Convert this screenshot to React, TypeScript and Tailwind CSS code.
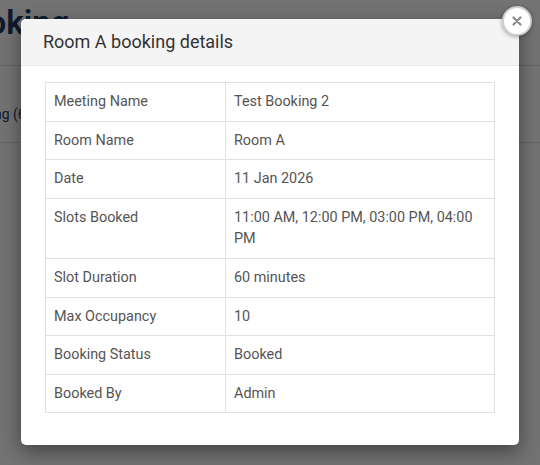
const rows: [string, string][] = [
  ['Meeting Name', 'Test Booking 2'],
  ['Room Name', 'Room A'],
  ['Date', '11 Jan 2026'],
  ['Slots Booked', '11:00 AM, 12:00 PM, 03:00 PM, 04:00 PM'],
  ['Slot Duration', '60 minutes'],
  ['Max Occupancy', '10'],
  ['Booking Status', 'Booked'],
  ['Booked By', 'Admin'],
];

export default function App() {
  return (
    <div className="relative w-[540px] h-[465px] overflow-hidden bg-white font-['Roboto',sans-serif]">
      {/* page behind the dialog */}
      <div className="h-[66px] border-b border-[#ddd] overflow-hidden">
        <h1 className="-ml-[52px] pt-[4px] text-[33px] font-semibold text-[#1f3d63] leading-[38px] whitespace-nowrap">Booking</h1>
      </div>
      <div className="h-[77px] border-b border-[#ddd] pt-[38px] overflow-hidden">
        <span className="block -ml-[54px] text-[14px] text-[#1f3d63] whitespace-nowrap">Upcoming (6)</span>
      </div>

      {/* overlay */}
      <div className="absolute inset-0 bg-black/55">
        <div className="relative mt-[19px] ml-[21px] w-[498px] rounded-[5px] bg-white shadow-[0_6px_20px_rgba(0,0,0,0.45)]">
          <div className="h-[47px] rounded-t-[5px] border-b border-[#e9e9e9] bg-[#f4f4f4] px-[22px] flex items-center">
            <h2 className="text-[18px] text-[#333] leading-none">Room A booking details</h2>
          </div>
          <div className="px-6 pt-4 pb-8">
            <table className="w-full border-collapse text-[14.4px] leading-[1.5] text-[#555]">
              <tbody>
                {rows.map(([k, v]) => (
                  <tr key={k}>
                    <td className="w-[180px] border border-[#dee2e6] px-2 py-2 align-top">{k}</td>
                    <td className="border border-[#dee2e6] px-2 py-2 align-top">{v}</td>
                  </tr>
                ))}
              </tbody>
            </table>
          </div>
          <button className="absolute -top-[13px] -right-[13px] w-[30px] h-[30px] rounded-full bg-white border-2 border-[#cfcfcf] shadow-[0_1px_4px_rgba(0,0,0,0.35)] flex items-center justify-center">
            <svg width="10" height="10" viewBox="0 0 10 10">
              <path d="M1.5 1.5L8.5 8.5M8.5 1.5L1.5 8.5" stroke="#8a8a8a" strokeWidth="2.2" strokeLinecap="round" />
            </svg>
          </button>
        </div>
      </div>
    </div>
  );
}
